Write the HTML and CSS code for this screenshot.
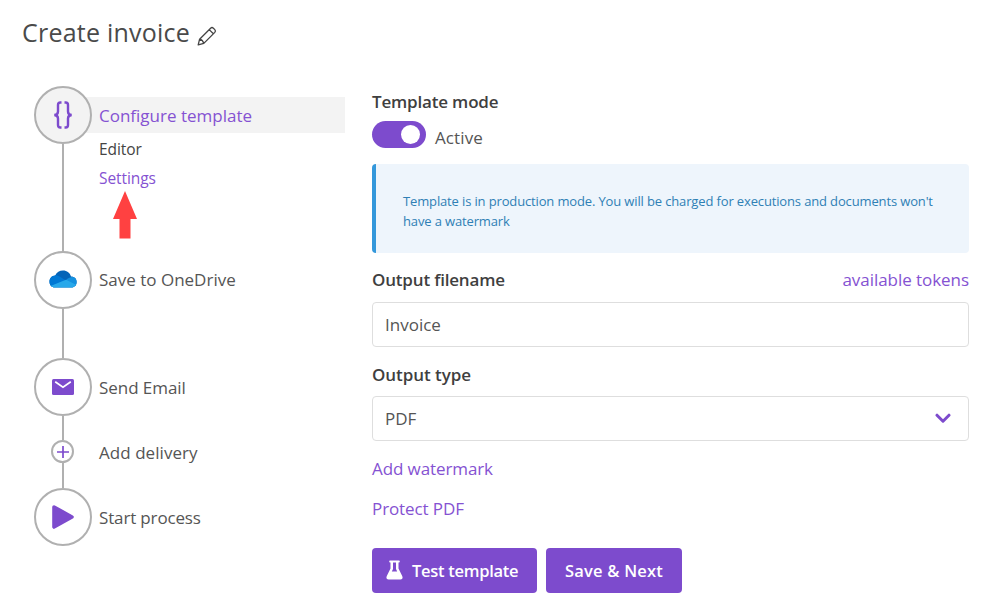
FILE: index.html
```html
<!DOCTYPE html>
<html lang="en">
<head>
<meta charset="utf-8">
<title>Create invoice</title>
<link rel="stylesheet" href="styles.css">
</head>
<body>
<header class="page-header">
  <h1 class="title">Create invoice</h1>
  <svg class="pencil" width="20" height="20" viewBox="0 0 20 20" fill="none" stroke="#444" stroke-width="1.300" stroke-linejoin="round"><path d="M1.200 18.800 2.600 13.200 13.600 2.200Q15 .9 16.400 2.200L17.800 3.600Q19.100 5 17.800 6.400L6.800 17.400ZM2.600 13.200Q5.800 13.800 6.800 17.400M12.200 3.600 16.400 7.800"/></svg>
</header>
<div class="layout">
  <nav class="steps">
    <div class="step step-configure">
      <div class="rail"><span class="circle active"><svg width="22" height="28" viewBox="0 0 22 28" fill="none" stroke="#7d4bcd" stroke-width="2.400"><path d="M9.500 1.500H8.300Q6 1.500 6 4V10.500Q6 13.800 2.300 14 6 14.200 6 17.500V24Q6 26.500 8.300 26.500H9.500M12.500 1.500H13.700Q16 1.500 16 4V10.500Q16 13.800 19.700 14 16 14.200 16 17.500V24Q16 26.500 13.700 26.500H12.500"/></svg></span></div>
      <div class="step-body">
        <div class="current"><a class="link t-configure">Configure template</a></div>
        <a class="sub t-editor">Editor</a>
        <a class="sub link t-settings">Settings</a>
        <svg class="arrow" width="24" height="48" viewBox="0 0 24 48"><path d="M12 0 24 28H17.500V47.500H6.500V28H0Z" fill="#ff4141"/></svg>
      </div>
    </div>
    <div class="step step-save">
      <div class="rail"><span class="circle"><svg class="cloud" width="28" height="18" viewBox="0 0 28 18"><defs><clipPath id="cloud"><path d="M6 17.500C2.500 17.500.5 15 .5 11.500.5 8 3 5.600 6.200 5.400 7.800 2.500 10.500.6 14 .6 18 .6 21 3 22 6.600 25.500 6.600 27.600 9 27.600 12 27.600 15.200 25.500 17.500 22.500 17.500Z"/></clipPath></defs><g clip-path="url(#cloud)"><path fill="#0364b8" d="M0 0H28V18H0Z"/><path fill="#0078d4" d="M0 5.500Q6 3.800 10.500 6.500L17 10.500 3 18H0Z"/><path fill="#1490df" d="M16.800 10.300Q20 6 28 6.800V17L16 11Z"/><path fill="#28a8ea" d="M1.500 16 17 9.700 27.500 15V18H1.500Z"/></g></svg></span></div>
      <div class="label t-save">Save to OneDrive</div>
    </div>
    <div class="step step-email">
      <div class="rail"><span class="circle"><svg width="22" height="16" viewBox="0 0 22 16"><rect width="22" height="16" rx="1.500" fill="#7d4bcd"/><path d="M3.200 2.800 11 8.300 18.800 2.800" fill="none" stroke="#fff" stroke-width="1.700"/></svg></span></div>
      <div class="label t-email">Send Email</div>
    </div>
    <div class="step step-add">
      <div class="rail"><span class="circle small"><svg width="12" height="12" viewBox="0 0 12 12"><path d="M6 0V12M0 6H12" stroke="#7d4bcd" stroke-width="1.700"/></svg></span></div>
      <div class="label t-add">Add delivery</div>
    </div>
    <div class="step step-start">
      <div class="rail"><span class="circle"><svg width="22" height="24" viewBox="0 0 22 24"><path d="M2 2 20 12 2 22Z" fill="#7d4bcd" stroke="#7d4bcd" stroke-width="3.600" stroke-linejoin="round"/></svg></span></div>
      <div class="label t-start">Start process</div>
    </div>
  </nav>
  <main class="form">
    <div class="heading"><span class="t-mode">Template mode</span></div>
    <div class="toggle-row"><span class="toggle"><span class="knob"></span></span><span class="t-active">Active</span></div>
    <div class="alert">Template is in production mode. You will be charged for executions and documents won't have a watermark</div>
    <div class="heading file-heading"><span class="t-file">Output filename</span><a class="link t-tokens">available tokens</a></div>
    <div class="field"><span class="t-invoice">Invoice</span></div>
    <div class="heading type-heading"><span class="t-type">Output type</span></div>
    <div class="field"><span class="t-pdf">PDF</span><svg width="16" height="11" viewBox="0 0 16 11" fill="none" stroke="#7d4bcd" stroke-width="3" stroke-linecap="round" stroke-linejoin="round"><path d="M2 2.200 8 8.200 14 2.200"/></svg></div>
    <a class="link option"><span class="t-watermark">Add watermark</span></a>
    <a class="link option"><span class="t-protect">Protect PDF</span></a>
    <div class="buttons">
      <button class="btn btn-test"><svg width="17" height="20" viewBox="0 0 17 20" fill="#fff"><path fill-rule="evenodd" d="M4 .5H13Q13.800.5 13.800 1.500T13 2.500H12.500V8.500L16.200 16Q17.500 19.500 14.500 19.500H2.500Q-.5 19.500.8 16L4.500 8.500V2.500H4Q3.200 2.500 3.200 1.500T4 .5ZM7 2.500V9L5.800 11.500H11.200L10 9V2.500Z"/></svg><span class="t-test">Test template</span></button>
      <button class="btn btn-save"><span class="t-next">Save &amp; Next</span></button>
    </div>
  </main>
</div>
</body>
</html>
```
FILE: styles.css
```css
* { box-sizing: border-box; }
body { margin: 0; width: 1000px; height: 610px; overflow: hidden; background: #fff; color: #555; font: 17px/24px "Open Sans", "Noto Sans", sans-serif; }
svg { display: block; flex: none; }
span, a { white-space: nowrap; }
.link { color: #8552d2; }
.page-header { display: flex; height: 86px; padding: 13px 0 0 22px; }
.title { margin: 0; font-size: 25px; line-height: 38px; font-weight: 400; letter-spacing: .22px; color: #4a4a4a; }
.pencil { margin: 13px 0 0 7px; }
.layout { display: flex; }
.steps { width: 311px; margin-left: 34px; }
.step { display: flex; }
.rail { display: flex; flex-direction: column; align-items: center; width: 57px; flex: none; }
.rail::after { content: ""; flex: 1; width: 2px; background: #b0b0b0; }
.circle { display: flex; align-items: center; justify-content: center; width: 58px; height: 58px; border: 2px solid #b0b0b0; border-radius: 50%; background: #fff; flex: none; }
.circle.active { background: #f3f3f3; z-index: 1; }
.circle.small { width: 23px; height: 23px; }
.step-configure { height: 165px; }
.step-save { height: 107px; }
.step-email { height: 82px; }
.step-add { height: 48px; }
.step-start .rail::after { display: none; }
.step-body { flex: 1; display: flex; flex-direction: column; padding-top: 11px; }
.current { height: 36px; margin-left: -6px; padding: 7px 0 0 14px; background: #f3f3f3; }
.sub { font-size: 15.500px; line-height: 28px; margin-left: 8px; }
.sub.t-editor { margin-top: 2px; color: #444; }
.sub.t-settings { margin-top: 1px; }
.t-editor, .t-settings { letter-spacing: -.08px; }
.arrow { margin: -1px 0 0 22px; }
.cloud { margin-bottom: 2px; }
.label { height: 58px; line-height: 60px; padding-left: 8px; }
.label.t-save { line-height: 58px; }
.t-email { letter-spacing: -.05px; }
.t-start { letter-spacing: -.15px; }
.step-add .label { height: 23px; line-height: 25px; letter-spacing: .05px; }
.form { width: 597px; margin-left: 27px; }
.heading { display: flex; justify-content: space-between; height: 24px; margin-top: 4px; font-weight: 600; letter-spacing: -.18px; color: #3f3f3f; }
.heading .link { font-weight: 400; letter-spacing: -.05px; }
.toggle-row { display: flex; gap: 9px; height: 43px; padding-top: 7px; line-height: 34px; }
.toggle { width: 54px; height: 27px; border-radius: 14px; background: #7d4bcd; display: flex; align-items: center; justify-content: flex-end; padding-right: 6px; }
.knob { width: 19px; height: 19px; border-radius: 50%; background: #fff; }
.t-active { letter-spacing: .1px; }
.alert { height: 89px; margin-top: 7px; padding: 27px 25px 0 27px; border-left: 4px solid #3498db; border-radius: 4px; background: #eef5fc; color: #2f80b5; font-size: 13px; line-height: 20px; letter-spacing: -.14px; }
.file-heading { margin-top: 15px; }
.type-heading { line-height: 25px; }
.field { display: flex; align-items: center; justify-content: space-between; height: 45px; margin-top: 10px; padding: 0 17px 0 12px; border: 1px solid #dedede; border-radius: 4px; }
.type-heading { margin-top: 15px; letter-spacing: -.05px; }
.option { display: block; height: 40px; padding-top: 16px; letter-spacing: -.1px; }
.buttons { display: flex; gap: 9px; margin-top: 27px; }
.btn { display: flex; align-items: center; height: 45px; border: 0; border-radius: 4px; background: #7d4bcd; color: #fff; font: 600 16.500px/24px "Open Sans", sans-serif; padding: 1px 0 0; }
.btn-test { width: 165px; padding-left: 14px; gap: 9px; letter-spacing: -.28px; }
.btn-test svg { margin-top: -2px; }
.btn-save { width: 136px; padding-left: 19px; letter-spacing: .2px; }
```
